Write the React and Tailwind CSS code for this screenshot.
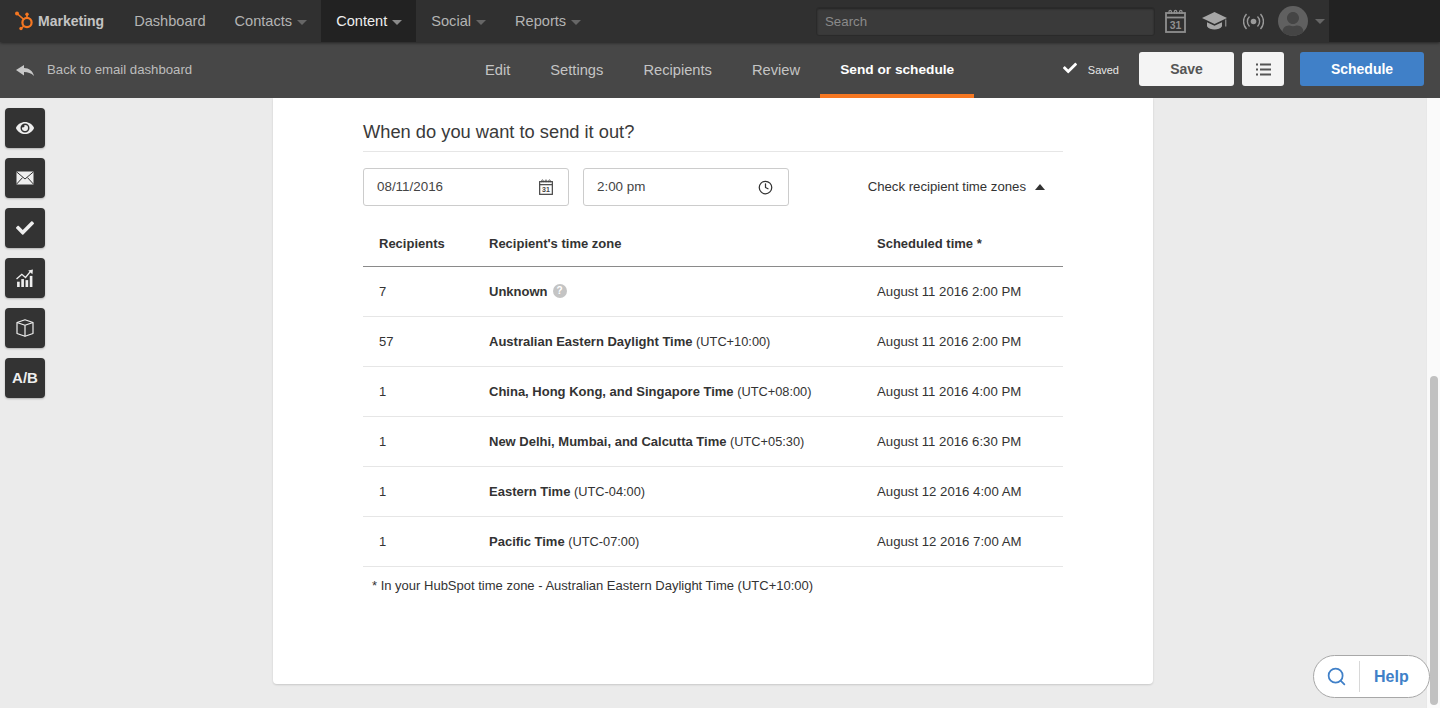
import React from 'react';
import { FaCheck, FaEye, FaUser } from 'react-icons/fa';
import { Clock, Search } from 'lucide-react';

const NAV = [
  { label: 'Dashboard' },
  { label: 'Contacts', caret: true },
  { label: 'Content', caret: true, active: true },
  { label: 'Social', caret: true },
  { label: 'Reports', caret: true },
];

const TABS = ['Edit', 'Settings', 'Recipients', 'Review', 'Send or schedule'];

const ROWS = [
  { count: '7', zone: 'Unknown', help: true, time: 'August 11 2016 2:00 PM' },
  { count: '57', zone: 'Australian Eastern Daylight Time', utc: '(UTC+10:00)', time: 'August 11 2016 2:00 PM' },
  { count: '1', zone: 'China, Hong Kong, and Singapore Time', utc: '(UTC+08:00)', time: 'August 11 2016 4:00 PM' },
  { count: '1', zone: 'New Delhi, Mumbai, and Calcutta Time', utc: '(UTC+05:30)', time: 'August 11 2016 6:30 PM' },
  { count: '1', zone: 'Eastern Time', utc: '(UTC-04:00)', time: 'August 12 2016 4:00 AM' },
  { count: '1', zone: 'Pacific Time', utc: '(UTC-07:00)', time: 'August 12 2016 7:00 AM' },
];

const Caret = ({ className = '' }) => (
  <span className={`inline-block w-0 h-0 border-x-[5px] border-x-transparent border-t-[5px] ${className}`} />
);

const Sprocket = () => (
  <svg width="20" height="20" viewBox="0 0 20 20" fill="none" stroke="#f57722">
    <circle cx="13" cy="11.5" r="4.6" strokeWidth="2.2" />
    <path d="M3 2.5l7 6.2M13 7V3.5M10 15l-3 2.5" strokeWidth="1.6" />
    <circle cx="3" cy="2.5" r="2" fill="#f57722" stroke="none" />
    <circle cx="13" cy="3.2" r="1.7" fill="#f57722" stroke="none" />
    <circle cx="7" cy="17.5" r="1.7" fill="#f57722" stroke="none" />
  </svg>
);

const CalendarIcon = ({ size = 21, height = 24, color = '#8f8f8f' }) => (
  <svg width={size} height={height} viewBox="0 0 21 24" fill="none" stroke={color}>
    <rect x="1" y="4" width="19" height="19" strokeWidth="1.8" />
    <path d="M1 8.5h19" strokeWidth="1.8" />
    <path d="M4 5V2.5a1.2 1.2 0 012.4 0V5M9.3 5V2.5a1.2 1.2 0 012.4 0V5M14.6 5V2.5a1.2 1.2 0 012.4 0V5" strokeWidth="1.2" />
    <text x="10.5" y="20" textAnchor="middle" fontSize="10.5" fontWeight="700" fill={color} stroke="none" fontFamily="Liberation Sans, sans-serif">31</text>
  </svg>
);

const CapIcon = () => (
  <svg width="26" height="18" viewBox="0 0 26 18" fill="#a6a6a6">
    <path d="M12.5 0L25 6l-12.5 6L0 6z" />
    <path d="M5 10.2v4c2.5 4.4 12.5 4.4 15 0v-4l-7.5 3.6z" />
    <path d="M23.3 7.5h1v7h-1z" />
  </svg>
);

const Broadcast = () => (
  <svg width="21" height="17" viewBox="0 0 21 17" fill="none" stroke="#9a9a9a" strokeWidth="1.4">
    <circle cx="10.5" cy="8.5" r="2.8" fill="#9a9a9a" stroke="none" />
    <path d="M6.5 3.5a7 7 0 000 10M14.5 3.5a7 7 0 010 10M3.5 1a11 11 0 000 15M17.5 1a11 11 0 010 15" />
  </svg>
);

const ReplyIcon = () => (
  <svg width="18" height="11" viewBox="0 0 18 11" fill="#c8c8c8">
    <path d="M0 5L8 0v3c5 0 9 3 10 8-3-3-6-4-10-4v3.5z" />
  </svg>
);

const ListIcon = () => (
  <svg width="15" height="13" viewBox="0 0 15 13" fill="#555555">
    <rect x="0" y="0.5" width="2" height="2" />
    <rect x="4" y="0.5" width="11" height="2" />
    <rect x="0" y="5.5" width="2" height="2" />
    <rect x="4" y="5.5" width="11" height="2" />
    <rect x="0" y="10.5" width="2" height="2" />
    <rect x="4" y="10.5" width="11" height="2" />
  </svg>
);

const MailIcon = () => (
  <svg width="18" height="14" viewBox="0 0 18 14">
    <rect x="0.5" y="0.5" width="17" height="13" fill="#eee" />
    <path d="M0.5 0.8L9 8l8.5-7.2M0.5 13.2l6-6.6M17.5 13.2l-6-6.6" fill="none" stroke="#333" strokeWidth="1" />
  </svg>
);

const ChartIcon = () => (
  <svg width="18" height="18" viewBox="0 0 17 17" fill="#eee">
    <rect x="1" y="12" width="2.5" height="5" />
    <rect x="5" y="9.5" width="2.5" height="7.5" />
    <rect x="9" y="10.5" width="2.5" height="6.5" />
    <rect x="13" y="6.5" width="2.5" height="10.5" />
    <path d="M0.5 9.5L5.5 5l3.5 3 4.5-5.5" fill="none" stroke="#eee" strokeWidth="1.3" />
    <path d="M11.5 1.5L16 0.5l-0.5 4.5z" />
  </svg>
);

const BoxIcon = () => (
  <svg width="18" height="18" viewBox="0 0 18 18" fill="none" stroke="#eee" strokeWidth="1.2" strokeLinejoin="round">
    <path d="M1 3.5L9 0.8l8 2.7v11L9 17.3l-8-2.8z" />
    <path d="M1 3.5L9 6.3l8-2.8M9 6.3v11" />
  </svg>
);

const ToolButton = ({ children }) => (
  <div className="w-10 h-10 rounded-[4px] bg-[#333333] flex items-center justify-center text-[#eeeeee] shadow-[0_1px_2px_rgba(0,0,0,0.25)]">
    {children}
  </div>
);

const TopBar = () => (
  <header className="h-[42px] shrink-0 flex items-stretch bg-[#303030] shadow-[0_1px_3px_rgba(0,0,0,0.5)] relative z-20">
    <div className="flex items-center pl-[14px] pr-[15px] gap-[4px]">
      <Sprocket />
      <span className="text-[14px] font-bold text-[#c4c4c4]">Marketing</span>
    </div>
    {NAV.map((item) => (
      <div
        key={item.label}
        className={`flex items-center gap-[5px] pl-[15px] pr-[14px] pt-[2px] text-[14.6px] ${item.active ? 'bg-[#222222] text-[#eeeeee]' : 'text-[#b4b4b4]'}`}
      >
        {item.label}
        {item.caret && <Caret className={item.active ? 'border-t-[#8a8a8a]' : 'border-t-[#666666]'} />}
      </div>
    ))}
    <div className="ml-auto flex items-center pr-[4px]">
      <div className="w-[339px] h-[29px] mt-[1px] rounded-[3px] bg-[#3a3a3a] border border-[#2a2a2a] shadow-[inset_0_1px_2px_rgba(0,0,0,0.4)] flex items-center pl-2 pt-[1px] text-[13.3px] text-[#8a8a8a]">
        Search
      </div>
      <div className="ml-[10px]">
        <CalendarIcon />
      </div>
      <div className="ml-[16px]">
        <CapIcon />
      </div>
      <div className="ml-[15px]">
        <Broadcast />
      </div>
      <div className="ml-[14px] w-[30px] h-[30px] rounded-full bg-[#606060] overflow-hidden flex items-end justify-center">
        <FaUser className="text-[#454545]" size={24} />
      </div>
      <Caret className="ml-[7px] border-t-[#666666]" />
    </div>
    <div className="w-[111px] bg-[#222222]" />
  </header>
);

const SubBar = () => (
  <div className="h-[56px] shrink-0 flex items-stretch bg-[#474747] relative z-10 pl-[16px] pr-[16px]">
    <div className="w-[449px] flex items-center gap-[13px] text-[13.2px] text-[#bdbdbd]">
      <ReplyIcon />
      Back to email dashboard
    </div>
    <nav className="flex items-stretch">
      {TABS.map((tab, i) => {
        const active = i === TABS.length - 1;
        return (
          <div
            key={tab}
            className={`flex items-center px-[20px] border-b-[4px] border-t-[4px] border-t-transparent ${active ? 'border-b-[#f57722] text-white font-bold text-[13.7px]' : 'border-b-transparent text-[#c4c4c4] text-[14.7px]'}`}
          >
            {tab}
          </div>
        );
      })}
    </nav>
    <div className="flex items-center ml-auto pb-[2px]">
      <FaCheck size={14} className="text-white -mt-[3px]" />
      <span className="ml-[11px] mt-[2px] text-[11px] text-[#e6e6e6] mr-[20px]">Saved</span>
      <div className="w-[95px] h-[34px] rounded-[3px] bg-[#f4f4f4] flex items-center justify-center text-[14px] font-bold text-[#555555]">
        Save
      </div>
      <div className="ml-[8px] w-[42px] h-[34px] rounded-[3px] bg-[#f4f4f4] flex items-center justify-center">
        <ListIcon />
      </div>
      <div className="ml-[16px] w-[124px] h-[34px] rounded-[3px] bg-[#4080c8] flex items-center justify-center text-[14px] font-bold text-white">
        Schedule
      </div>
    </div>
  </div>
);

const Field = ({ value, children }) => (
  <div className="w-[206px] h-[38px] rounded-[3px] border border-[#cccccc] flex items-center justify-between pl-[13px] pr-[15px] text-[13.4px] text-[#444444]">
    {value}
    {children}
  </div>
);

const Card = () => (
  <section className="w-[880px] h-[586px] bg-white rounded-b-[4px] shadow-[0_1px_2px_rgba(0,0,0,0.15)] px-[90px] pt-[23px]">
    <h2 className="text-[18.3px] leading-[22px] text-[#3a3a3a] pb-[8px] border-b border-[#e6e6e6]">When do you want to send it out?</h2>
    <div className="flex items-center gap-[14px] mt-[16px]">
      <Field value="08/11/2016">
        <CalendarIcon size={14} height={16} color="#444444" />
      </Field>
      <Field value="2:00 pm">
        <Clock size={15} strokeWidth={2} className="text-[#333333]" />
      </Field>
      <div className="ml-auto pr-[18px] flex items-center gap-[9px] text-[13.2px] text-[#333333]">
        Check recipient time zones
        <span className="w-0 h-0 border-x-[5px] border-x-transparent border-b-[6px] border-b-[#333333]" />
      </div>
    </div>
    <table className="w-full mt-[14px] text-[13px] text-[#333333] border-collapse">
      <thead>
        <tr className="h-[46px] border-b border-[#8a8a8a]">
          <th className="w-[126px] pl-[16px] pt-[2px] text-left font-bold">Recipients</th>
          <th className="w-[388px] pt-[2px] text-left font-bold">Recipient's time zone</th>
          <th className="pt-[2px] text-left font-bold">Scheduled time *</th>
        </tr>
      </thead>
      <tbody>
        {ROWS.map((row) => (
          <tr key={row.zone} className="h-[50px] border-b border-[#e6e6e6]">
            <td className="pl-[16px] pt-[2px]">{row.count}</td>
            <td className="pt-[2px]">
              <span className="font-bold">{row.zone}</span>
              {row.utc && <span className="text-[12.8px]"> {row.utc}</span>}
              {row.help && (
                <span className="ml-[5px] inline-flex w-[14px] h-[14px] rounded-full bg-[#c4c4c4] text-white text-[10px] font-bold items-center justify-center align-[2px]">?</span>
              )}
            </td>
            <td className="pt-[2px] text-[13.2px]">{row.time}</td>
          </tr>
        ))}
      </tbody>
    </table>
    <p className="mt-[11px] pl-[9px] text-[13px] leading-[15px] text-[#333333]">
      * In your HubSpot time zone - Australian Eastern Daylight Time (UTC+10:00)
    </p>
  </section>
);

export default function App() {
  return (
    <div className="w-full h-[708px] overflow-hidden flex flex-col bg-[#ebebeb] relative font-['Liberation_Sans',Arial,sans-serif]">
      <TopBar />
      <SubBar />
      <main className="flex-1 flex min-h-0">
        <aside className="w-[273px] shrink-0 pl-[5px] pt-[10px] flex flex-col gap-[10px]">
          <ToolButton><FaEye size={18} /></ToolButton>
          <ToolButton><MailIcon /></ToolButton>
          <ToolButton><FaCheck size={18} /></ToolButton>
          <ToolButton><ChartIcon /></ToolButton>
          <ToolButton><BoxIcon /></ToolButton>
          <ToolButton><span className="text-[15px] font-bold">A/B</span></ToolButton>
        </aside>
        <Card />
        <div className="ml-auto w-[14px] bg-[#fafafa] border-l border-[#e8e8e8] flex flex-col items-center pt-[278px] pb-[3px]">
          <div className="w-[8px] flex-1 rounded-full bg-[#c1c1c1]" />
        </div>
      </main>
      <div className="absolute left-[1313px] top-[655px] w-[117px] h-[43px] rounded-full bg-white border border-[#a8a8a8] flex items-center text-[#4080c8]">
        <div className="w-[46px] h-[31px] border-r border-[#d8d8d8] flex items-center justify-center">
          <Search size={21} strokeWidth={2} />
        </div>
        <span className="ml-[14px] text-[16px] font-bold">Help</span>
      </div>
    </div>
  );
}
